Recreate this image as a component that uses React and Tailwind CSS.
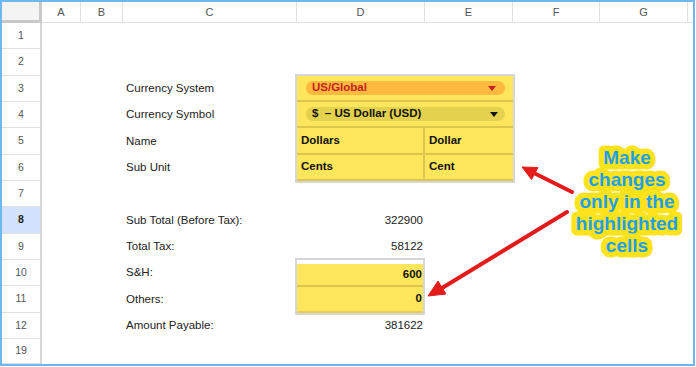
const font = "font-['Liberation_Sans',Arial,sans-serif]";

const cols = ['A', 'B', 'C', 'D', 'E', 'F', 'G'];
const rowNums = ['1', '2', '3', '4', '5', '6', '7', '8', '9', '10', '11', '12', '19'];

function Caret({ color }) {
  return (
    <svg width="8" height="5" viewBox="0 0 8 5">
      <path d="M0 0h8L4 5z" fill={color} />
    </svg>
  );
}

function Label({ row, children }) {
  return (
    <div className={`col-start-4 ${row} flex items-center pl-[3px] text-[11.5px] text-[#222]`}>
      {children}
    </div>
  );
}

function Value({ row, children }) {
  return (
    <div className={`col-start-5 ${row} flex items-center justify-end pr-[2px] text-[11.5px] text-[#222]`}>
      {children}
    </div>
  );
}

function Callout() {
  const lines = ['Make', 'changes', 'only in the', 'highlighted', 'cells'];
  return (
    <svg className="absolute inset-0 pointer-events-none" width="696" height="367" viewBox="0 0 696 367">
      {/* arrows */}
      <g fill="#e41b1b" stroke="#e41b1b">
        <line x1="572" y1="192" x2="534" y2="173" strokeWidth="4" strokeLinecap="round" />
        <polygon points="522,167 538,167.5 531.5,179.5" strokeWidth="1" strokeLinejoin="round" />
        <line x1="567" y1="212" x2="442" y2="288" strokeWidth="4" strokeLinecap="round" />
        <polygon points="428,296 438,281 446,294" strokeWidth="1" strokeLinejoin="round" />
      </g>
      {/* text with yellow halo */}
      <g
        fontFamily="'Liberation Sans', Arial, sans-serif"
        fontWeight="bold"
        fontSize="19"
        textAnchor="middle"
      >
        {lines.map((t, i) => (
          <text
            key={t}
            x="627"
            y={163.5 + i * 22}
            fill="#21a0e6"
            stroke="#fde21c"
            strokeWidth="11"
            strokeLinejoin="round"
            paintOrder="stroke"
          >
            {t}
          </text>
        ))}
      </g>
    </svg>
  );
}

export default function App() {
  return (
    <div className={`relative w-[696px] h-[367px] bg-white overflow-hidden ${font}`}>
      <div className="w-[695px] h-[366px] border-2 border-[#6db8ef]">
        <div className="grid grid-cols-[40px_39px_42px_174px_128px_88px_87px_88px_1fr] grid-rows-[21px_26px_27px_26px_26px_27px_26px_26px_27px_26px_26px_27px_26px_25px] h-full">
          {/* corner */}
          <div className="col-start-1 row-start-1 bg-[#f4f4f4] border-r-[3px] border-b-[3px] border-[#c9c9c9]" />
          {/* column headers */}
          {cols.map((c) => (
            <div
              key={c}
              className="row-start-1 flex items-center justify-center border-r border-b border-[#e0e0e0] text-[11px] text-[#555]"
            >
              {c}
            </div>
          ))}
          <div className="row-start-1 border-b border-[#e0e0e0]" />

          {/* row headers */}
          {rowNums.map((n, i) => (
            <div
              key={n}
              className={`col-start-1 flex items-center justify-center border-r-2 border-r-[#d6d6d6] border-b border-b-[#e0e0e0] text-[10.5px] ${
                n === '8' ? 'bg-[#d3e3fd] text-[#1f1f1f] font-bold' : 'bg-white text-[#555]'
              }`}
              style={{ gridRowStart: i + 2 }}
            >
              {n}
            </div>
          ))}

          {/* labels */}
          <Label row="row-start-4">Currency System</Label>
          <Label row="row-start-5">Currency Symbol</Label>
          <Label row="row-start-6">Name</Label>
          <Label row="row-start-7">Sub Unit</Label>
          <Label row="row-start-9">Sub Total (Before Tax):</Label>
          <Label row="row-start-10">Total Tax:</Label>
          <Label row="row-start-11">S&amp;H:</Label>
          <Label row="row-start-12">Others:</Label>
          <Label row="row-start-13">Amount Payable:</Label>

          {/* currency settings */}
          <div className="col-start-5 col-span-2 row-start-4 row-span-4 grid grid-cols-[128px_88px] grid-rows-[26px_26px_27px_26px] bg-[#fde65c] shadow-[0_0_0_2px_#d6d6d6] font-bold text-[11.5px] text-[#111]">
            <div className="col-span-2 flex items-center pl-[9px] pr-[8px] border-b-2 border-[#dcc64e]">
              <div className="flex-1 h-[14px] rounded-full bg-[#fbb940] flex items-center justify-between pl-[6px] pr-[9px] text-[#c5221f]">
                <span>US/Global</span>
                <Caret color="#c5221f" />
              </div>
            </div>
            <div className="col-span-2 flex items-center pl-[9px] pr-[8px] border-b-2 border-[#dcc64e]">
              <div className="flex-1 h-[14px] rounded-full bg-[#e4d24f] flex items-center justify-between pl-[6px] pr-[7px]">
                <span className="whitespace-pre">{'$  – US Dollar (USD)'}</span>
                <Caret color="#111" />
              </div>
            </div>
            <div className="flex items-center pl-[4px] border-b-2 border-r-2 border-[#dcc64e]">Dollars</div>
            <div className="flex items-center pl-[4px] border-b-2 border-[#dcc64e]">Dollar</div>
            <div className="flex items-center pl-[4px] border-b-2 border-r-2 border-[#dcc64e]">Cents</div>
            <div className="flex items-center pl-[4px] border-b-2 border-[#dcc64e]">Cent</div>
          </div>

          {/* totals */}
          <Value row="row-start-9">322900</Value>
          <Value row="row-start-10">58122</Value>
          <div className="col-start-5 row-start-11 row-span-2 w-[126px] flex flex-col bg-white pt-[4px] shadow-[0_0_0_2px_#d6d6d6] font-bold text-[11.5px] text-[#111]">
            <div className="flex-1 flex items-center justify-end pr-[1px] bg-[#fde65c] border-b-2 border-[#dcc64e]">600</div>
            <div className="h-[26px] flex items-center justify-end pr-[1px] bg-[#fde65c] border-b-2 border-[#e6d155]">0</div>
          </div>
          <Value row="row-start-13">381622</Value>
        </div>
      </div>
      <Callout />
    </div>
  );
}
